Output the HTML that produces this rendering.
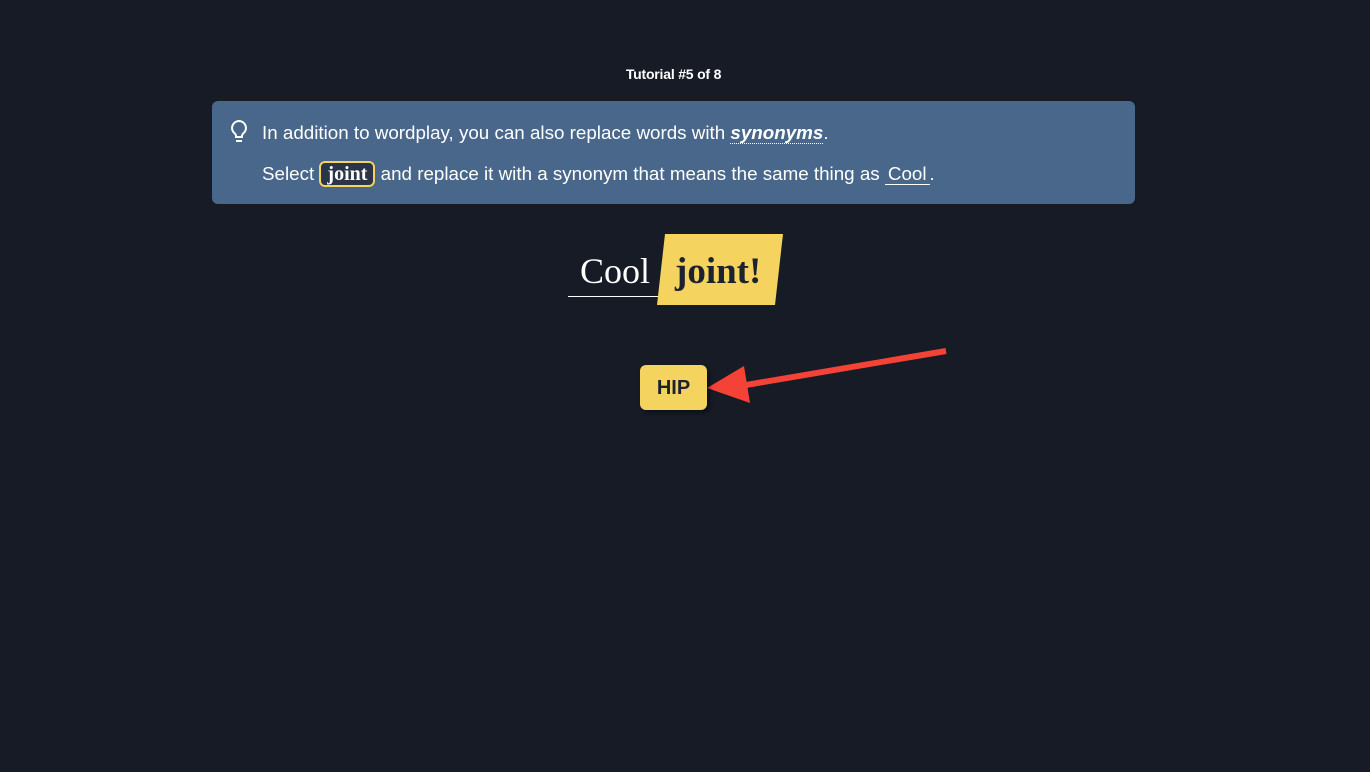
<!DOCTYPE html>
<html><head><style>
body{margin:0;width:1370px;height:772px;background:#161b26;font-family:"Liberation Sans",sans-serif;position:relative;overflow:hidden}
.t{position:absolute;top:66px;left:621px;width:105px;text-align:center;color:#fff;font-weight:bold;font-size:14px;white-space:nowrap;letter-spacing:-0.2px}
.b{position:absolute;left:212px;top:101px;width:923px;height:103px;background:#48678a;border-radius:6px;color:#fff;font-size:18.8px}
.l1{position:absolute;left:50px;top:21px;white-space:nowrap}
.l2{position:absolute;left:50px;top:62px;white-space:nowrap}
.syn{font-weight:bold;font-style:italic;border-bottom:1px dotted #fff}
.j{font-family:"Liberation Serif",serif;font-weight:bold;border:2px solid #f4d35e;border-radius:6px;background:#2a3547;padding:0 6px;font-size:20px}
.c{border-bottom:1px solid #fff;padding:0 3px}
.cool{position:absolute;left:580px;top:250px;color:#fff;font-family:"Liberation Serif",serif;font-size:36px}
.ul{position:absolute;left:568px;top:296px;width:94px;height:1px;background:#fff}
.hip{position:absolute;left:640px;top:365px;width:67px;height:45px;background:#f4d35e;border-radius:6px;box-shadow:3px 3px 4px rgba(0,0,0,.4);text-align:center;line-height:47px;font-weight:bold;font-size:20px;color:#1c2230}
</style></head><body>
<div class="t">Tutorial #5 of 8</div>
<div class="b">
<svg style="position:absolute;left:17px;top:18px" width="20" height="26" viewBox="0 0 20 26" fill="none" stroke="#fff" stroke-width="2"><path d="M10 2a7 7 0 0 0-4 12.7c.8.7 1 1.5 1 2.3v1h6v-1c0-.8.2-1.6 1-2.3A7 7 0 0 0 10 2z"/><path d="M7 22h6"/></svg>
<div class="l1">In addition to wordplay, you can also replace words with <span class="syn">synonyms</span>.</div>
<div class="l2">Select <span class="j">joint</span> and replace it with a synonym that means the same thing as <span class="c">Cool</span>.</div>
</div>
<div class="cool">Cool</div>
<div class="ul"></div>
<svg style="position:absolute;left:0;top:0" width="1370" height="772">
<polygon points="665,234 783,234 775,305 657,305" fill="#f4d35e"/>
<text x="675" y="283" font-family="Liberation Serif,serif" font-weight="bold" font-size="37" fill="#1c2230">joint!</text>
<line x1="946" y1="351" x2="740" y2="386" stroke="#f44336" stroke-width="6"/>
<polygon points="707,388 744,366 750,403" fill="#f44336"/>
</svg>
<div class="hip">HIP</div>
</body></html>
